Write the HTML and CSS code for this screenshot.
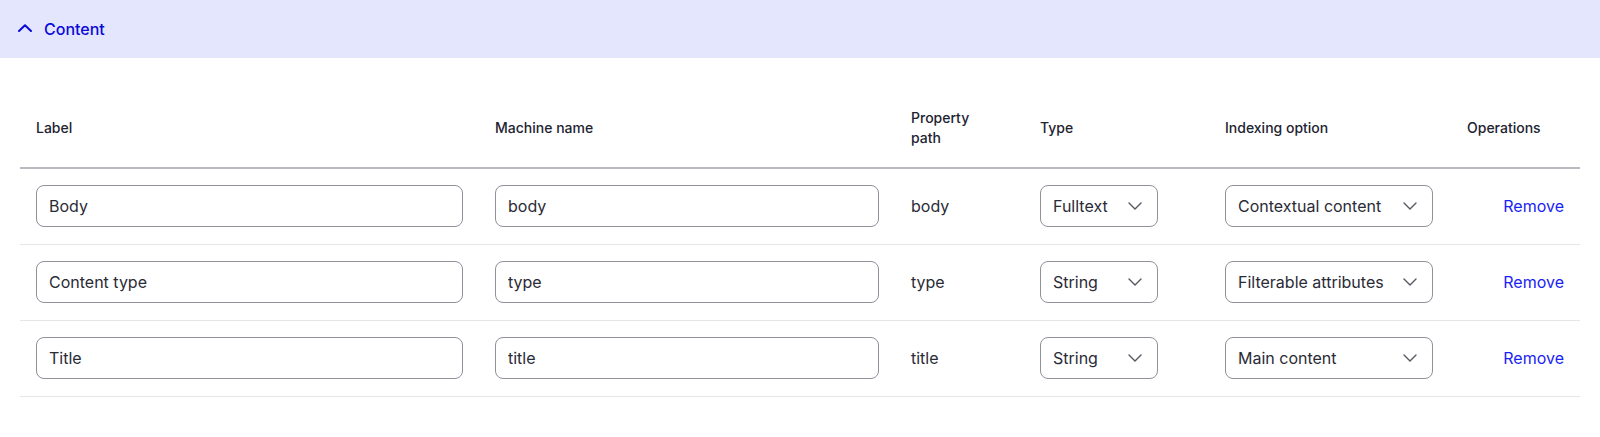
FILE: index.html
```html
<!DOCTYPE html>
<html lang="en">
<head>
<meta charset="utf-8">
<title>Content fields</title>
<link rel="stylesheet" href="styles.css">
</head>
<body>
<section class="details">
  <div class="summary">
    <svg class="summary-icon" width="14" height="8" viewBox="0 0 14 8" aria-hidden="true"><path d="M1 7 L7 1.2 L13 7" fill="none" stroke="currentColor" stroke-width="2" stroke-linecap="round" stroke-linejoin="round"/></svg>
    <span class="summary-text">Content</span>
  </div>
  <div class="details-body">
    <table class="fields">
      <colgroup>
        <col class="c-label"><col class="c-machine"><col class="c-path"><col class="c-type"><col class="c-index"><col class="c-ops">
      </colgroup>
      <thead>
        <tr>
          <th>Label</th>
          <th>Machine name</th>
          <th class="th-path">Property path</th>
          <th>Type</th>
          <th>Indexing option</th>
          <th>Operations</th>
        </tr>
      </thead>
      <tbody>
        <tr>
          <td><input class="text" type="text" value="Body"></td>
          <td><input class="text" type="text" value="body"></td>
          <td class="plain">body</td>
          <td><div class="select s-type"><span>Fulltext</span><svg width="14" height="8" viewBox="0 0 14 8" aria-hidden="true"><path d="M1 1 L7 7 L13 1" fill="none" stroke="currentColor" stroke-width="1.4" stroke-linecap="round" stroke-linejoin="round"/></svg></div></td>
          <td><div class="select s-index"><span>Contextual content</span><svg width="14" height="8" viewBox="0 0 14 8" aria-hidden="true"><path d="M1 1 L7 7 L13 1" fill="none" stroke="currentColor" stroke-width="1.4" stroke-linecap="round" stroke-linejoin="round"/></svg></div></td>
          <td class="ops"><a href="#">Remove</a></td>
        </tr>
        <tr>
          <td><input class="text" type="text" value="Content type"></td>
          <td><input class="text" type="text" value="type"></td>
          <td class="plain">type</td>
          <td><div class="select s-type"><span>String</span><svg width="14" height="8" viewBox="0 0 14 8" aria-hidden="true"><path d="M1 1 L7 7 L13 1" fill="none" stroke="currentColor" stroke-width="1.4" stroke-linecap="round" stroke-linejoin="round"/></svg></div></td>
          <td><div class="select s-index"><span>Filterable attributes</span><svg width="14" height="8" viewBox="0 0 14 8" aria-hidden="true"><path d="M1 1 L7 7 L13 1" fill="none" stroke="currentColor" stroke-width="1.4" stroke-linecap="round" stroke-linejoin="round"/></svg></div></td>
          <td class="ops"><a href="#">Remove</a></td>
        </tr>
        <tr>
          <td><input class="text" type="text" value="Title"></td>
          <td><input class="text" type="text" value="title"></td>
          <td class="plain">title</td>
          <td><div class="select s-type"><span>String</span><svg width="14" height="8" viewBox="0 0 14 8" aria-hidden="true"><path d="M1 1 L7 7 L13 1" fill="none" stroke="currentColor" stroke-width="1.4" stroke-linecap="round" stroke-linejoin="round"/></svg></div></td>
          <td><div class="select s-index"><span>Main content</span><svg width="14" height="8" viewBox="0 0 14 8" aria-hidden="true"><path d="M1 1 L7 7 L13 1" fill="none" stroke="currentColor" stroke-width="1.4" stroke-linecap="round" stroke-linejoin="round"/></svg></div></td>
          <td class="ops"><a href="#">Remove</a></td>
        </tr>
      </tbody>
    </table>
  </div>
</section>
</body>
</html>
```

FILE: styles.css
```css
* { box-sizing: border-box; }

html, body {
  margin: 0;
  padding: 0;
  background: #ffffff;
}

body {
  font-family: Inter, "Noto Sans", "Liberation Sans", sans-serif;
  color: #222330;
  font-size: 16px;
}

.summary {
  height: 58px;
  background: #e4e6fd;
  display: flex;
  align-items: center;
  padding-left: 18px;
  gap: 12px;
  color: #0a0ad8;
}

.summary-icon {
  display: block;
  margin-top: -2px;
}

.summary-text {
  font-size: 16px;
  font-weight: 500;
  line-height: 20px;
}

.details-body {
  padding: 31px 20px 0;
}

.fields {
  width: 1560px;
  border-collapse: collapse;
  table-layout: fixed;
}

.c-label { width: 459px; }
.c-machine { width: 416px; }
.c-path { width: 129px; }
.c-type { width: 185px; }
.c-index { width: 242px; }
.c-ops { width: 129px; }

.fields th {
  text-align: left;
  font-size: 14px;
  font-weight: 500;
  line-height: 20px;
  padding: 19px 16px 19px;
  height: 79px;
  vertical-align: middle;
  color: #222330;
  border-bottom: 2px solid #b8b9be;
}

.fields th.th-path {
  padding-right: 40px;
}

.fields td {
  padding: 16px 16px;
  vertical-align: middle;
  border-bottom: 1px solid #e6e6ea;
  height: 76px;
}

.text {
  display: block;
  width: 100%;
  height: 42px;
  margin: 0;
  padding: 0 12px;
  border: 1px solid #8f919b;
  border-radius: 8px;
  font-family: inherit;
  font-size: 16px;
  color: #2a2b36;
  background: #ffffff;
  outline: none;
}

.plain {
  font-size: 16px;
  line-height: 20px;
  color: #2a2b36;
}

.select {
  height: 42px;
  border: 1px solid #8f919b;
  border-radius: 8px;
  display: flex;
  align-items: center;
  justify-content: space-between;
  padding: 0 15px 0 12px;
  font-size: 16px;
  color: #2a2b36;
  background: #ffffff;
  white-space: nowrap;
}

.select svg {
  color: #55565f;
  flex: none;
  display: block;
}

.s-type { width: 118px; }
.s-index { width: 208px; }

.ops {
  text-align: right;
}

.ops a {
  color: #1a23f5;
  text-decoration: none;
  font-size: 16px;
}
```
